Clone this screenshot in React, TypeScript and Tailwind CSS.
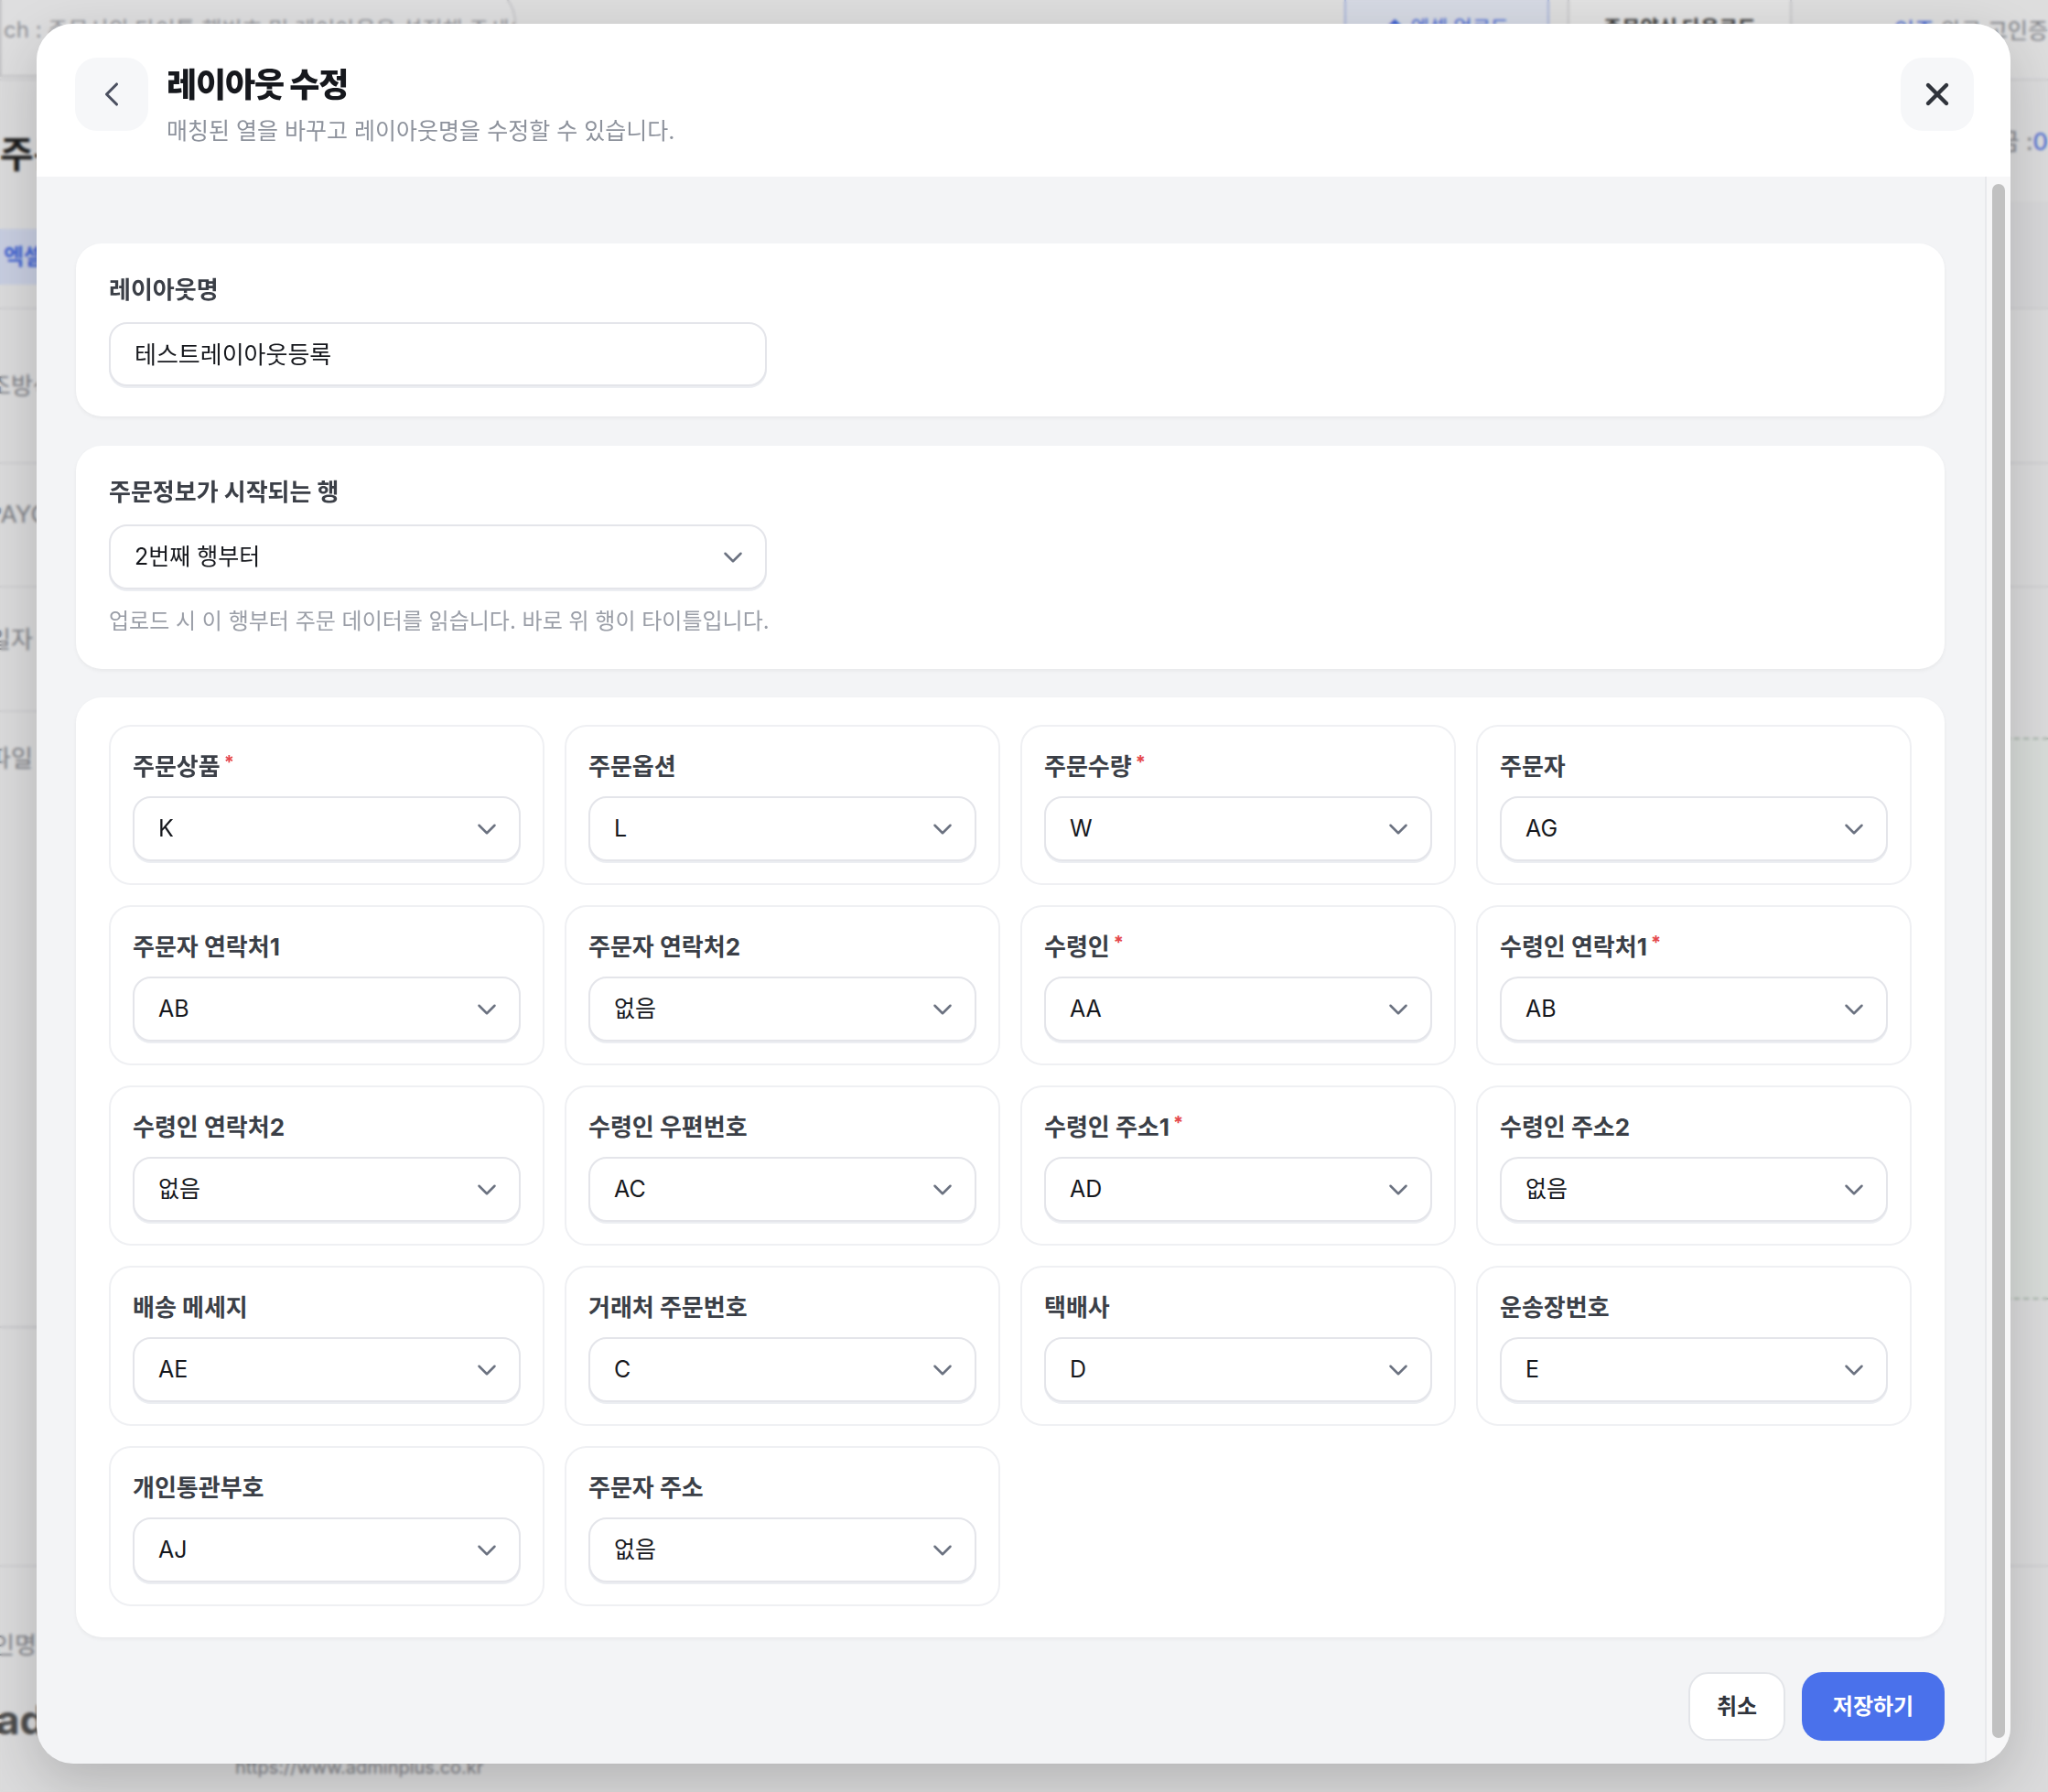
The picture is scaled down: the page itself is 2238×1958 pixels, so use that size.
import React from 'react';
import { ChevronLeft, ChevronDown, X } from 'lucide-react';

type Field = { label: string; value: string; required?: boolean };

const FIELDS: Field[] = [
  { label: '주문상품', value: 'K', required: true },
  { label: '주문옵션', value: 'L' },
  { label: '주문수량', value: 'W', required: true },
  { label: '주문자', value: 'AG' },
  { label: '주문자 연락처1', value: 'AB' },
  { label: '주문자 연락처2', value: '없음' },
  { label: '수령인', value: 'AA', required: true },
  { label: '수령인 연락처1', value: 'AB', required: true },
  { label: '수령인 연락처2', value: '없음' },
  { label: '수령인 우편번호', value: 'AC' },
  { label: '수령인 주소1', value: 'AD', required: true },
  { label: '수령인 주소2', value: '없음' },
  { label: '배송 메세지', value: 'AE' },
  { label: '거래처 주문번호', value: 'C' },
  { label: '택배사', value: 'D' },
  { label: '운송장번호', value: 'E' },
  { label: '개인통관부호', value: 'AJ' },
  { label: '주문자 주소', value: '없음' },
];

const SelectBox: React.FC<{ value: string; className?: string }> = ({ value, className = '' }) => (
  <div
    className={`flex h-[71px] items-center justify-between rounded-[20px] border-2 border-[#e4e5ea] bg-white pl-[26px] pr-[18px] shadow-[0_2px_0_#eceef2] ${className}`}
  >
    <span className="text-[25px] text-[#16181d]">{value}</span>
    <ChevronDown size={34} strokeWidth={1.8} className="text-[#6b7280]" />
  </div>
);

const FieldCell: React.FC<{ field: Field }> = ({ field }) => (
  <div className="flex h-[175px] flex-col rounded-[24px] border-2 border-[#eff0f3] bg-white px-[24px] pt-[27px] pb-[24px]">
    <div className="mb-[15px] flex items-start text-[26px] font-bold leading-[34px] text-[#3b3f47]">
      <span>{field.label}</span>
      {field.required && <span className="ml-[4px] text-[20px] leading-[24px] text-[#e5484d]">*</span>}
    </div>
    <SelectBox value={field.value} />
  </div>
);

const BackgroundPage: React.FC = () => (
  <div className="flex h-full w-full flex-col bg-[#f4f4f5] text-[#555]">
    {/* top bar */}
    <div className="flex h-[88px] shrink-0 items-start justify-between border-b-2 border-[#e7e7ea] bg-[#f6f6f7]">
      <div className="-mt-[20px] flex h-[104px] w-[564px] items-start overflow-hidden whitespace-nowrap rounded-r-[46px] border-2 border-[#dcdcdf] bg-[#f8f8f9] pt-[36px] pl-[2px] text-[24px] leading-[30px] text-[#a0a2a8]">
        ch : 주문서의 타이틀 행번호 및 레이아웃을 설정해 주세요
      </div>
      <div className="flex items-start gap-[20px]">
        <div className="-mt-[20px] flex h-[100px] w-[224px] items-center justify-center whitespace-nowrap rounded-b-[40px] border-2 border-[#b9c7f1] bg-[#eef2fd] text-[22px] text-[#4a6fe8]">
          ⬆ 엑셀 업로드
        </div>
        <div className="-mt-[20px] flex h-[100px] w-[245px] items-center justify-center whitespace-nowrap rounded-b-[40px] border-2 border-[#dcdcdf] bg-[#fbfbfb] text-[22px] font-bold text-[#444]">
          주문양식 다운로드
        </div>
        <div className="mt-[16px] w-[260px] whitespace-nowrap text-right text-[24px] text-[#8d8f95]">
          <span className="text-[#4a6fe8]">인증</span> 완료 고인증
        </div>
      </div>
    </div>
    <div className="flex flex-1">
      <div className="flex w-[120px] flex-col whitespace-nowrap">
        <div className="flex h-[162px] items-center text-[40px] font-bold text-[#222]">주문</div>
        <div className="flex h-[61px] items-center bg-[#dfe6fb] pl-[4px] text-[24px] font-bold text-[#4a6fe8]">엑셀</div>
        <div className="h-[27px] border-b-2 border-[#e7e7ea]" />
        <div className="-ml-[12px] flex h-[169px] items-center border-b-2 border-[#e7e7ea] text-[26px] text-[#8d8f95]">조방식</div>
        <div className="-ml-[14px] flex h-[135px] items-center border-b-2 border-[#e7e7ea] pb-[24px] text-[26px] text-[#8d8f95]">PAYCO</div>
        <div className="-ml-[12px] flex h-[136px] items-center border-b-2 border-[#e7e7ea] pb-[22px] text-[26px] text-[#8d8f95]">일자</div>
        <div className="-ml-[12px] flex h-[673px] items-start border-b-2 border-[#e0e0e3] pt-[33px] text-[26px] leading-[36px] text-[#8d8f95]">파일</div>
        <div className="h-[261px] border-b-2 border-[#e7e7ea]" />
        <div className="-ml-[8px] flex h-[120px] items-center pt-[50px] text-[26px] text-[#8d8f95]">인명(</div>
        <div className="-ml-[4px] flex h-[80px] items-center pt-[14px] text-[44px] font-bold text-[#555]">ad</div>
      </div>
      <div className="flex flex-1 items-end pb-[12px] pl-[137px] text-[20px] text-[#8d8f95]">https://www.adminplus.co.kr</div>
      <div className="flex w-[120px] flex-col whitespace-nowrap">
        <div className="flex h-[132px] items-center justify-end text-[26px] text-[#8d8f95]">
          금 : <span className="text-[#4a6fe8]">0</span>
        </div>
        <div className="h-[118px] border-b-2 border-[#e7e7ea] bg-[#f0f0f2]" />
        <div className="h-[169px] border-b-2 border-[#e7e7ea]" />
        <div className="h-[135px] border-b-2 border-[#e7e7ea]" />
        <div className="h-[164px]" />
        <div className="h-[614px] border-y-2 border-dashed border-[#b9c8bd] bg-[#f1f5f2]" />
        <div className="h-[292px] border-b-2 border-[#e7e7ea]" />
      </div>
    </div>
  </div>
);

export default function App() {
  return (
    <div className="relative h-[1958px] w-[2238px] overflow-hidden font-[Inter,'Noto_Sans_CJK_KR',sans-serif]">
      <BackgroundPage />
      <div className="absolute inset-0 bg-[#000]/10 backdrop-blur-[1.5px]" />

      {/* modal */}
      <div className="absolute left-[40px] top-[26px] flex h-[1901px] w-[2157px] flex-col overflow-hidden rounded-[40px] bg-[#f3f4f6] shadow-[0_20px_60px_rgba(0,0,0,0.18)]">
        {/* header */}
        <div className="flex h-[167px] shrink-0 items-start justify-between bg-white pl-[42px] pr-[40px] pt-[37px]">
          <div className="flex items-start">
            <button className="flex h-[80px] w-[80px] items-center justify-center rounded-[24px] bg-[#f6f7f9] text-[#4b5060]">
              <ChevronLeft size={44} strokeWidth={1.7} />
            </button>
            <div className="ml-[20px] mt-[6px]">
              <div className="text-[36px] font-black leading-[48px] tracking-[-0.03em] text-[#16181d]">레이아웃 수정</div>
              <div className="mt-[8px] text-[25px] leading-[36px] text-[#8d929c]">
                매칭된 열을 바꾸고 레이아웃명을 수정할 수 있습니다.
              </div>
            </div>
          </div>
          <button className="flex h-[80px] w-[80px] items-center justify-center rounded-[24px] bg-[#f6f7f9] text-[#30343c]">
            <X size={40} strokeWidth={2.6} />
          </button>
        </div>

        {/* body */}
        <div className="flex min-h-0 flex-1">
          <div className="flex flex-1 flex-col pl-[43px] pr-[44px] pt-[73px]">
            {/* layout name */}
            <div className="rounded-[28px] bg-white px-[36px] pt-[34px] pb-[33px] shadow-[0_2px_4px_rgba(0,0,0,0.05)]">
              <div className="mb-[18px] text-[26px] font-bold leading-[34px] text-[#3b3f47]">레이아웃명</div>
              <div className="flex h-[70px] w-[719px] items-center rounded-[20px] border-2 border-[#e4e5ea] bg-white pl-[26px] shadow-[0_2px_0_#eceef2]">
                <span className="text-[26px] text-[#16181d]">테스트레이아웃등록</span>
              </div>
            </div>

            {/* start row */}
            <div className="mt-[32px] rounded-[28px] bg-white px-[36px] pt-[34px] pb-[36px] shadow-[0_2px_4px_rgba(0,0,0,0.05)]">
              <div className="mb-[18px] text-[26px] font-bold leading-[34px] text-[#3b3f47]">주문정보가 시작되는 행</div>
              <SelectBox value="2번째 행부터" className="w-[719px]" />
              <div className="mt-[19px] text-[24px] leading-[32px] text-[#9a9ea7]">
                업로드 시 이 행부터 주문 데이터를 읽습니다. 바로 위 행이 타이틀입니다.
              </div>
            </div>

            {/* column mapping */}
            <div className="mt-[31px] rounded-[28px] bg-white px-[36px] pt-[30px] pb-[34px] shadow-[0_2px_4px_rgba(0,0,0,0.05)]">
              <div className="grid grid-cols-4 gap-[22px]">
                {FIELDS.map((f) => (
                  <FieldCell key={f.label} field={f} />
                ))}
              </div>
            </div>

            {/* footer */}
            <div className="mt-[38px] flex justify-end gap-[18px]">
              <button className="h-[75px] w-[106px] rounded-[22px] border-2 border-[#e3e5e9] bg-white text-[24px] font-bold text-[#30343c]">
                취소
              </button>
              <button className="h-[75px] w-[156px] rounded-[22px] bg-[#4a71eb] text-[24px] font-bold text-white">
                저장하기
              </button>
            </div>
          </div>

          {/* scrollbar */}
          <div className="flex w-[28px] shrink-0 justify-center border-l-2 border-[#e8e9ec] bg-[#f7f7f8] pt-[8px] pb-[28px]">
            <div className="w-[14px] rounded-full bg-[#c1c1c1]" />
          </div>
        </div>
      </div>
    </div>
  );
}
